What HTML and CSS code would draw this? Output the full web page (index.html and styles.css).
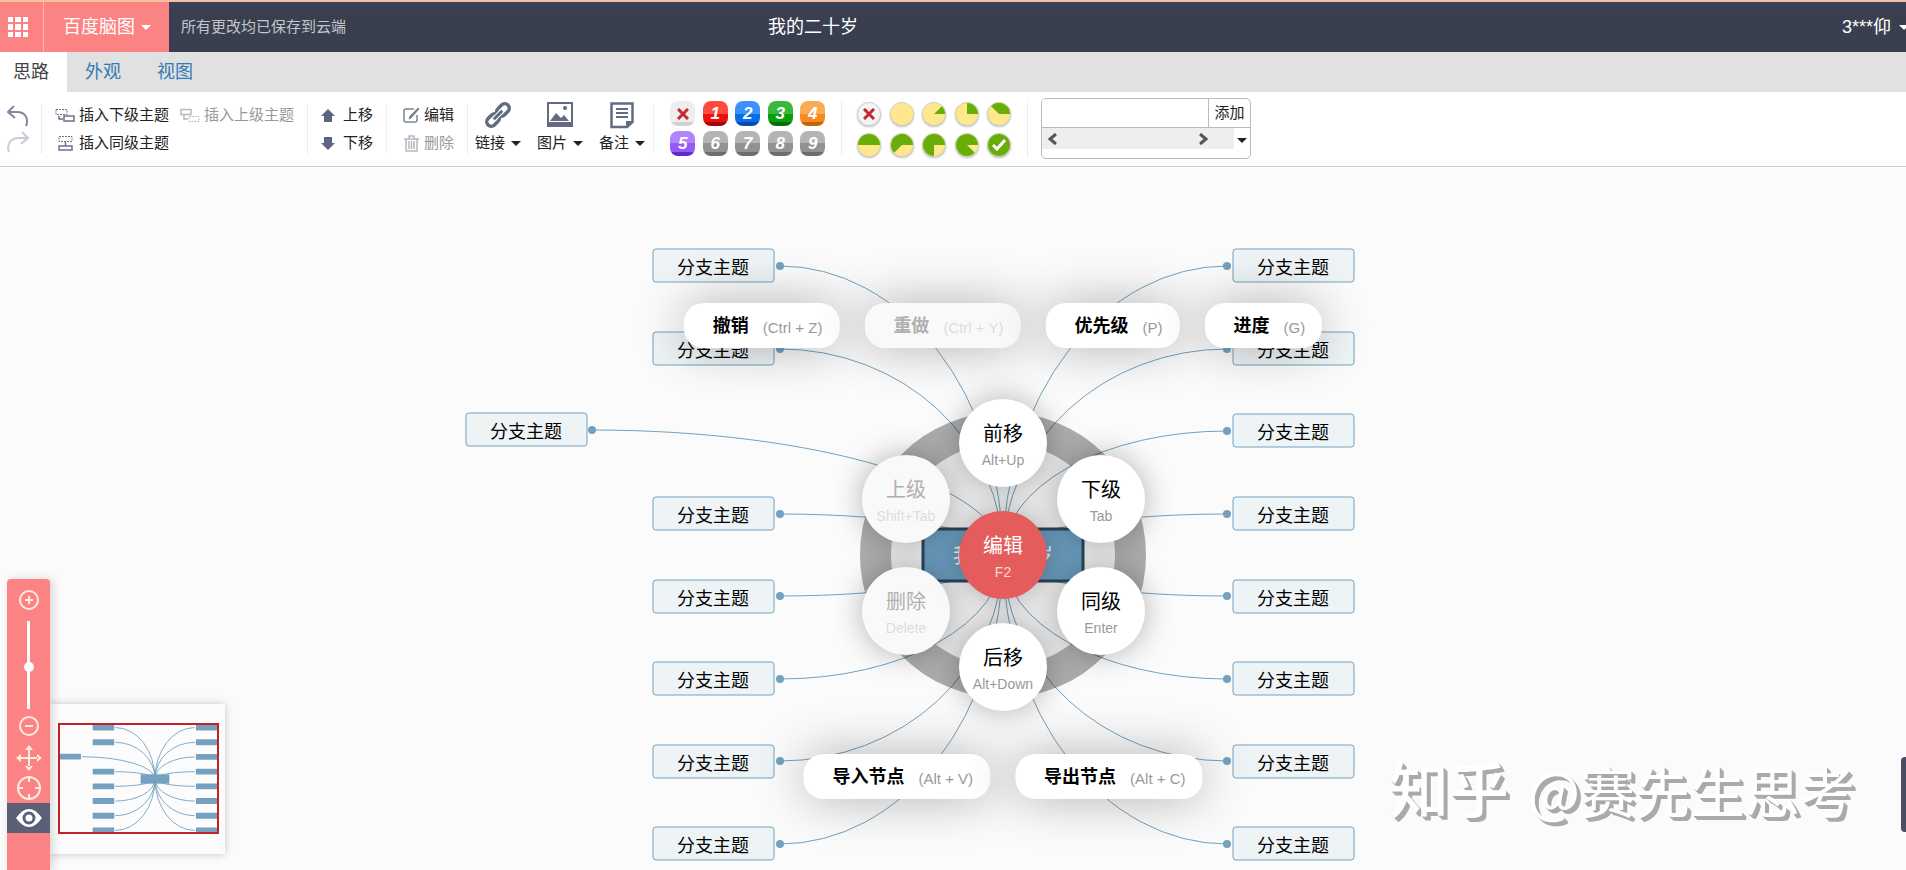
FILE: index.html
```html
<!DOCTYPE html>
<html lang="zh-CN">
<head>
<meta charset="utf-8">
<title>我的二十岁 - 百度脑图</title>
<link rel="stylesheet" href="styles.css">
</head>
<body>
<header class="header">
  <div class="header-left">
    <button class="apps" aria-label="应用">
      <svg width="20" height="20" fill="#fff"><path d="M0 0h5v5H0zM7 0h6v5H7zM15 0h5v5h-5zM0 7h5v6H0zM7 7h6v6H7zM15 7h5v6h-5zM0 15h5v5H0zM7 15h6v5H7zM15 15h5v5h-5z"/></svg>
    </button>
    <button class="brand">百度脑图<i class="caret"></i></button>
    <span class="saved">所有更改均已保存到云端</span>
  </div>
  <h1 class="title">我的二十岁</h1>
  <button class="user">3***仰<i class="caret"></i></button>
</header>

<nav class="tabs">
  <a class="tab active" href="#idea">思路</a>
  <a class="tab" href="#look">外观</a>
  <a class="tab" href="#view">视图</a>
</nav>

<div class="toolbar">
  <div class="group history">
    <button aria-label="撤销"><svg width="22" height="22" fill="none" stroke="#8088a0" stroke-width="2"><path d="M7 1L1 7l7 6M2 7h8c8 0 12 6 9 14"/></svg></button>
    <button aria-label="重做" disabled><svg width="22" height="22" fill="none" stroke="#c9ccd4" stroke-width="2"><path d="M15 1l6 6-7 6M20 7h-8C4 7-1 13 2 21"/></svg></button>
  </div>

  <div class="group insert">
    <div class="row">
      <button class="cmd"><svg width="20" height="15" fill="none" stroke="#6b7389"><path stroke-dasharray="2 1" d="M1 1.500h11v5H1z"/><path stroke-width="1.500" d="M4 8v3h4M9 8h10v5H9z"/></svg>插入下级主题</button>
      <button class="cmd" disabled><svg width="20" height="15" fill="none" stroke="#b5b9c3"><path stroke-width="1.500" d="M1 1.500h10v5H1zM4 7v4h4"/><path stroke-dasharray="2 1" d="M9 8.500h10v5H9z"/></svg>插入上级主题</button>
    </div>
    <div class="row">
      <button class="cmd"><svg width="20" height="16" fill="none" stroke="#6b7389"><path stroke-dasharray="2 1" d="M4 1.500h13v5H4z"/><path stroke-width="1.500" d="M10.500 7v4M4 11h13v4H4z"/></svg>插入同级主题</button>
    </div>
  </div>

  <div class="group arrange">
    <button class="cmd wide"><svg width="14" height="13" fill="#5c6480"><path d="M7 0l7 7h-3v6H3V7H0z"/></svg>上移</button>
    <button class="cmd wide"><svg width="14" height="13" fill="#5c6480"><path d="M7 13l7-7h-3V0H3v6H0z"/></svg>下移</button>
  </div>

  <div class="group edit">
    <button class="cmd"><svg width="17" height="16" fill="none" stroke="#7d8498" stroke-width="1.500"><path d="M11 2H3Q1 2 1 4v9q0 2 2 2h9q2 0 2-2V8"/><path fill="#7d8498" stroke-width="1" d="M15 1l1 1-8 9-2 1 1-3z"/></svg>编辑</button>
    <button class="cmd" disabled><svg width="17" height="17" fill="none" stroke="#b5b8c2" stroke-width="1.500"><path d="M1 4h15M6 4V1h5v3M3 4v12h11V4M6 6v8M8.500 6v8M11 6v8"/></svg>删除</button>
  </div>

  <div class="group attach">
    <button class="big"><svg width="28" height="28" viewBox="0 0 28 28"><g fill="none" stroke="#626b82" stroke-width="3.500" transform="rotate(-45 14 14)"><rect x="0" y="9.500" width="14" height="9" rx="4.500"/><rect x="14" y="9.500" width="14" height="9" rx="4.500"/><path stroke="#fff" stroke-width="5" d="M8 14h12"/><path d="M8 14h12" stroke-width="3"/></g></svg><span>链接<i class="caret"></i></span></button>
    <button class="big"><svg width="26" height="28" viewBox="0 0 26 28"><path fill="#626b82" d="M0 1h26v25H0z"/><path fill="#fff" d="M2 3h22v18H2z"/><path fill="#626b82" d="M3 20l6-8 5 5 3-3 5 6z"/><circle cx="18" cy="7" r="2" fill="#626b82"/></svg><span>图片<i class="caret"></i></span></button>
    <button class="big"><svg width="24" height="28" viewBox="0 0 24 28"><path fill="none" stroke="#626b82" stroke-width="2.500" d="M1.500 2.500h21V21L17 26H1.500z"/><path fill="#626b82" d="M16 20h7l-7 7zM6 7h12v2H6zM6 11h12v2H6zM6 15h12v2H6z"/></svg><span>备注<i class="caret"></i></span></button>
  </div>

  <div class="group priority">
    <button class="pri none" aria-label="移除优先级"><svg width="12" height="12" stroke="#c8272d" stroke-width="3"><path d="M1 1l10 10M11 1L1 11"/></svg></button>
    <button class="pri p1">1</button>
    <button class="pri p2">2</button>
    <button class="pri p3">3</button>
    <button class="pri p4">4</button>
    <button class="pri p5">5</button>
    <button class="pri">6</button>
    <button class="pri">7</button>
    <button class="pri">8</button>
    <button class="pri">9</button>
  </div>

  <div class="group progress">
    <button class="pie clear" aria-label="移除进度"><svg width="12" height="12" stroke="#c8272d" stroke-width="3"><path d="M1 1l10 10M11 1L1 11"/></svg></button>
    <button class="pie" aria-label="未开始"></button>
    <button class="pie" aria-label="完成 1/8"><svg width="22" height="22"><path d="M11 11L18.800 3.200A11 11 0 0 1 22 11z"/></svg></button>
    <button class="pie" aria-label="完成 1/4"><svg width="22" height="22"><path d="M11 11V0A11 11 0 0 1 22 11z"/></svg></button>
    <button class="pie" aria-label="完成 3/8"><svg width="22" height="22"><path d="M11 11L3.200 3.200A11 11 0 0 1 22 11z"/></svg></button>
    <button class="pie" aria-label="完成一半"><svg width="22" height="22"><path d="M0 11A11 11 0 0 1 22 11z"/></svg></button>
    <button class="pie" aria-label="完成 5/8"><svg width="22" height="22"><path d="M11 11L3.200 18.800A11 11 0 1 1 22 11z"/></svg></button>
    <button class="pie" aria-label="完成 3/4"><svg width="22" height="22"><path d="M11 11V22A11 11 0 1 1 22 11z"/></svg></button>
    <button class="pie" aria-label="完成 7/8"><svg width="22" height="22"><path d="M11 11L18.800 18.800A11 11 0 1 1 22 11z"/></svg></button>
    <button class="pie done" aria-label="已完成"><svg width="14" height="12"><path d="M1 6l4 4 8-9"/></svg></button>
  </div>

  <div class="tagbox">
    <div class="tag-row">
      <input type="text" class="tag-input" aria-label="标签">
      <button class="tag-add">添加</button>
    </div>
    <div class="tag-row">
      <div class="tag-scroll">
        <button aria-label="向左"><svg width="9" height="12" fill="none" stroke="#555" stroke-width="3"><path d="M8 1L2 6l6 5"/></svg></button>
        <button aria-label="向右"><svg width="9" height="12" fill="none" stroke="#555" stroke-width="3"><path d="M1 1l6 5-6 5"/></svg></button>
      </div>
      <button class="tag-more" aria-label="更多标签"><i class="caret"></i></button>
    </div>
  </div>
</div>

<main class="stage">
  <svg class="map" width="1" height="1">
    <defs>
      <g id="links">
        <path d="M0 0A223 289 0 0 0-223-289M0 0A223 206 0 0 0-223-206M0 0A411 125 0 0 0-411-125M0 0A223 41 0 0 0-223-41M0 0A223 41 0 0 1-223 41M0 0A223 124 0 0 1-223 124M0 0A223 206 0 0 1-223 206M0 0A223 289 0 0 1-223 289"/>
        <path d="M0 0A224 289 0 0 1 224-289M0 0A224 206 0 0 1 224-206M0 0A224 124 0 0 1 224-124M0 0A224 41 0 0 1 224-41M0 0A224 41 0 0 0 224 41M0 0A224 124 0 0 0 224 124M0 0A224 206 0 0 0 224 206M0 0A224 289 0 0 0 224 289"/>
      </g>
      <g id="boxes">
        <rect x="-350" y="-306" width="121" height="33" rx="3"/><rect x="-350" y="-223" width="121" height="33" rx="3"/><rect x="-537" y="-142" width="121" height="33" rx="3"/><rect x="-350" y="-58" width="121" height="33" rx="3"/><rect x="-350" y="25" width="121" height="33" rx="3"/><rect x="-350" y="107" width="121" height="33" rx="3"/><rect x="-350" y="190" width="121" height="33" rx="3"/><rect x="-350" y="272" width="121" height="33" rx="3"/>
        <rect x="230" y="-306" width="121" height="33" rx="3"/><rect x="230" y="-223" width="121" height="33" rx="3"/><rect x="230" y="-141" width="121" height="33" rx="3"/><rect x="230" y="-58" width="121" height="33" rx="3"/><rect x="230" y="25" width="121" height="33" rx="3"/><rect x="230" y="107" width="121" height="33" rx="3"/><rect x="230" y="190" width="121" height="33" rx="3"/><rect x="230" y="272" width="121" height="33" rx="3"/>
      </g>
    </defs>
    <use href="#links" class="links"/>
    <g class="dots">
      <circle cx="-223" cy="-289" r="4"/><circle cx="-223" cy="-206" r="4"/><circle cx="-411" cy="-125" r="4"/><circle cx="-223" cy="-41" r="4"/><circle cx="-223" cy="41" r="4"/><circle cx="-223" cy="124" r="4"/><circle cx="-223" cy="206" r="4"/><circle cx="-223" cy="289" r="4"/>
      <circle cx="224" cy="-289" r="4"/><circle cx="224" cy="-206" r="4"/><circle cx="224" cy="-124" r="4"/><circle cx="224" cy="-41" r="4"/><circle cx="224" cy="41" r="4"/><circle cx="224" cy="124" r="4"/><circle cx="224" cy="206" r="4"/><circle cx="224" cy="289" r="4"/>
    </g>
    <use href="#boxes" class="boxes"/>
    <g class="topics">
      <text x="-290" y="-281">分支主题</text><text x="-290" y="-198">分支主题</text><text x="-477" y="-117">分支主题</text><text x="-290" y="-33">分支主题</text><text x="-290" y="50">分支主题</text><text x="-290" y="132">分支主题</text><text x="-290" y="215">分支主题</text><text x="-290" y="297">分支主题</text>
      <text x="290" y="-281">分支主题</text><text x="290" y="-198">分支主题</text><text x="290" y="-116">分支主题</text><text x="290" y="-33">分支主题</text><text x="290" y="50">分支主题</text><text x="290" y="132">分支主题</text><text x="290" y="215">分支主题</text><text x="290" y="297">分支主题</text>
    </g>
    <rect class="root" x="-80" y="-26" width="160" height="52" rx="4"/>
    <text class="root-text" x="0" y="8">我的二十岁</text>
  </svg>

  <div class="hotbox">
    <div class="ring"></div>
    <div class="pills above">
      <button class="pill"><b>撤销</b><kbd>(Ctrl + Z)</kbd></button>
      <button class="pill" disabled><b>重做</b><kbd>(Ctrl + Y)</kbd></button>
      <button class="pill"><b>优先级</b><kbd>(P)</kbd></button>
      <button class="pill"><b>进度</b><kbd>(G)</kbd></button>
    </div>
    <div class="pills below">
      <button class="pill"><b>导入节点</b><kbd>(Alt + V)</kbd></button>
      <button class="pill"><b>导出节点</b><kbd>(Alt + C)</kbd></button>
    </div>
    <button class="disc n">前移<kbd>Alt+Up</kbd></button>
    <button class="disc ne">下级<kbd>Tab</kbd></button>
    <button class="disc se">同级<kbd>Enter</kbd></button>
    <button class="disc s">后移<kbd>Alt+Down</kbd></button>
    <button class="disc sw" disabled>删除<kbd>Delete</kbd></button>
    <button class="disc nw" disabled>上级<kbd>Shift+Tab</kbd></button>
    <button class="disc center">编辑<kbd>F2</kbd></button>
  </div>

  <div class="preview">
    <svg width="175" height="150">
      <clipPath id="frame"><path d="M9 20h159v110H9z"/></clipPath>
      <g clip-path="url(#frame)">
        <g transform="translate(105 75) scale(.178)">
          <use href="#links" class="mini-links"/>
          <use href="#boxes" class="mini-boxes"/>
          <path class="mini-boxes" d="M-80-26H80V26H-80z" stroke="#73a1bf"/>
        </g>
      </g>
      <path d="M9 20h159v109H9z" fill="none" stroke="#c42127" stroke-width="2"/>
    </svg>
  </div>

  <div class="navigator">
    <button aria-label="放大"><svg width="22" height="22" fill="none" stroke="#ffeae0" stroke-width="2"><circle cx="11" cy="11" r="9"/><path d="M7 11h8M11 7v8"/></svg></button>
    <input class="zoom" type="range" min="0" max="100" value="48" aria-label="缩放">
    <button aria-label="缩小"><svg width="22" height="22" fill="none" stroke="#ffeae0" stroke-width="2"><circle cx="11" cy="11" r="9"/><path d="M7 11h8"/></svg></button>
    <button aria-label="拖动"><svg width="26" height="26" fill="#ffeae0"><path d="M12 4h2v18h-2zM4 12h18v2H4zM13 0l4 5H9zM13 26l4-5H9zM0 13l5-4v8zM26 13l-5-4v8z"/></svg></button>
    <button aria-label="定位根节点"><svg width="26" height="26" fill="none" stroke="#ffeae0" stroke-width="2"><circle cx="13" cy="13" r="11"/><path d="M13 1v6M13 19v6M1 13h6M19 13h6"/></svg></button>
    <button class="eye" aria-label="导航器"><svg width="26" height="18"><path fill="#fff" d="M0 9q13-18 26 0-13 18-26 0z"/><circle cx="13" cy="9" r="5" fill="none" stroke="#5b6077" stroke-width="3"/></svg></button>
  </div>

  <p class="watermark"><strong>知乎</strong> @赛先生思考</p>
  <button class="side-handle" aria-label="展开侧栏"></button>
</main>
</body>
</html>
```

FILE: styles.css
```css
* { box-sizing: border-box; }

body {
  margin: 0;
  height: 100vh;
  display: flex;
  flex-direction: column;
  overflow: hidden;
  background: #fbfbfb;
  color: #222;
  font: 15px/20px "Liberation Sans", "Noto Sans CJK SC", sans-serif;
}

button {
  margin: 0;
  padding: 0;
  border: 0;
  background: none;
  color: inherit;
  font: inherit;
  white-space: nowrap;
}

svg { display: block; flex: none; }

.caret {
  display: inline-block;
  flex: none;
  border: 5px solid transparent;
  border-top-color: currentColor;
  border-bottom: 0;
}

/* header */
.header {
  display: flex;
  align-items: stretch;
  height: 52px;
  border-top: 2px solid #f4c29c;
  background: linear-gradient(#37425a, #3a3f4f 8px);
  color: #fff;
}

.header-left { display: flex; flex: 0 0 40.3%; }

.apps {
  display: grid;
  place-items: center start;
  width: 44px;
  padding-left: 8px;
  border-right: 1px solid #fdb4b4;
  background: #fc8383;
}

.brand {
  display: flex;
  align-items: center;
  gap: 6px;
  width: 125px;
  padding-left: 19px;
  background: #fc8383;
  font-size: 18px;
}

.saved { align-self: center; padding-left: 12px; color: #c4c6cc; }

.title { margin: 0; align-self: center; font-size: 18px; font-weight: 400; }

.user {
  display: flex;
  align-items: center;
  gap: 8px;
  margin: 0 -3px 0 auto;
  font-size: 18px;
}

/* tabs */
.tabs { display: flex; height: 40px; background: #e1e1e1; }

.tab {
  padding: 0 18px;
  color: #337ab7;
  font-size: 18px;
  line-height: 40px;
  text-decoration: none;
}

.tab.active { padding-left: 13px; background: #fff; color: #444; }

/* toolbar */
.toolbar {
  display: flex;
  height: 75px;
  border-bottom: 1px solid #ccc;
  background: #fff;
}

.group {
  display: flex;
  flex: none;
  height: 48px;
  margin-top: 13px;
  border-right: 1px dotted #ddd;
}

.history { flex-direction: column; align-items: flex-start; justify-content: space-between; padding: 0 12px 0 7px; }

.insert, .arrange, .edit { flex-direction: column; justify-content: space-between; padding: 0 13px; }
.edit { padding-left: 16px; }

.row { display: flex; gap: 11px; }

.cmd { display: flex; align-items: center; gap: 4px; }
.cmd.wide { gap: 8px; }
.cmd:disabled { color: #999; }

.attach { gap: 16px; align-items: flex-end; padding: 0 8px 0 7px; }
.big { display: flex; flex-direction: column; align-items: center; gap: 4px; }
.big span { display: flex; align-items: center; gap: 6px; }

.priority {
  display: grid;
  grid-template-columns: repeat(5, 25px);
  justify-content: space-between;
  row-gap: 5px;
  width: 188px;
  height: 55px;
  margin-top: 9px;
  padding: 0 16px;
}

.pri {
  height: 25px;
  border-radius: 8px;
  background: linear-gradient(#b4b4b4 0 50%, #929292 50% 84%, #6c6c6c 84%);
  color: #fff;
  font: italic bold 17px/23px "Liberation Sans", sans-serif;
}

.pri.none { display: grid; place-items: center; background: linear-gradient(#eee 0 84%, #d0d0d0 84%); }
.p1 { background: linear-gradient(#ff4a3d 0 50%, #ea1010 50% 84%, #a80606 84%); }
.p2 { background: linear-gradient(#3c92f8 0 50%, #0a6ceb 50% 84%, #074bb0 84%); }
.p3 { background: linear-gradient(#3bb83b 0 50%, #0a9f0a 50% 84%, #067006 84%); }
.p4 { background: linear-gradient(#fbab53 0 50%, #f48a20 50% 84%, #c76206 84%); }
.p5 { background: linear-gradient(#b383fb 0 50%, #975af5 50% 84%, #5d2ccb 84%); }

.progress {
  display: grid;
  grid-template-columns: repeat(5, 24px);
  justify-content: space-between;
  row-gap: 6px;
  width: 186px;
  height: 55px;
  margin-top: 10px;
  padding: 0 16px 0 15px;
}

.pie {
  display: grid;
  place-items: center;
  width: 24px;
  height: 24px;
  border: 1px solid #d4d0c4;
  border-radius: 50%;
  background: #ffe88c;
  box-shadow: 0 1px 2px #bbb;
  fill: #68ae08;
}

.clear { background: #f4f4f4; }
.done { background: #68ae08; fill: none; stroke: #fff; stroke-width: 3px; }

.tagbox {
  flex: none;
  width: 210px;
  height: 61px;
  margin: 6px 0 0 13px;
  overflow: hidden;
  border: 1px solid #bbb;
  border-radius: 5px;
}

.tag-row { display: flex; }
.tag-row:first-child { height: 29px; border-bottom: 1px solid #bbb; }
.tag-input { flex: 1; min-width: 0; border: 0; outline: 0; font: inherit; }
.tag-add { width: 42px; border-left: 1px solid #bbb; }

.tag-scroll {
  display: flex;
  justify-content: space-between;
  flex: 1;
  height: 21px;
  padding: 0 26px 0 6px;
  background: #eee;
}

.tag-more { display: grid; place-items: center; width: 16px; height: 24px; }

/* mind map */
.stage { position: relative; flex: 1; min-height: 0; overflow: hidden; }

.map { position: absolute; left: calc(50% + 50px); top: 388px; overflow: visible; }

.links { fill: none; stroke: #73a1bf; }
.dots { fill: #73a1bf; }
.boxes { fill: #eef3f6; stroke: #73a1bf; }

.topics { fill: #000; font-size: 18px; text-anchor: middle; }

.root { fill: #70a4c8; stroke: #2c4a60; stroke-width: 3px; }
.root-text { fill: #fff; font-size: 20px; text-anchor: middle; }

/* radial menu */
.hotbox { position: absolute; left: calc(50% + 50px); top: 388px; width: 0; height: 0; }

.ring {
  position: absolute;
  left: -143px;
  top: -143px;
  width: 286px;
  height: 286px;
  border: 31px solid rgba(0, 0, 0, .28);
  border-radius: 50%;
  background: rgba(0, 0, 0, .05);
}

.pills {
  position: absolute;
  left: 0;
  display: flex;
  gap: 25px;
  transform: translateX(-50%);
}

.above { top: -252px; }
.below { top: 199px; }

.pill {
  display: flex;
  align-items: center;
  gap: 14px;
  height: 45px;
  padding: 0 17px 0 29px;
  border-radius: 20px;
  background: #fff;
  box-shadow: 0 0 50px rgba(0, 0, 0, .3);
  color: #000;
  font-size: 18px;
}

kbd { font: 15px/20px "Liberation Sans", sans-serif; color: #999; }
.pill kbd { padding-top: 4px; }

.disc {
  position: absolute;
  display: flex;
  flex-direction: column;
  align-items: center;
  justify-content: center;
  gap: 4px;
  width: 88px;
  height: 88px;
  padding-top: 6px;
  border-radius: 50%;
  background: #fff;
  box-shadow: 0 0 30px rgba(0, 0, 0, .3);
  color: #000;
  font-size: 20px;
  line-height: 24px;
}

.disc kbd { font-size: 14px; }

.n { left: -44px; top: -156px; }
.s { left: -44px; top: 68px; }
.ne { left: 54px; top: -100px; }
.se { left: 54px; top: 12px; }
.nw { left: -141px; top: -100px; }
.sw { left: -141px; top: 12px; }

.center { left: -44px; top: -44px; background: #e45d5c; color: #fff; }
.center kbd { color: #f9d6d5; }

.pill:disabled, .disc:disabled { background: #f9f9f9; color: #b0b0b0; }
.pill:disabled kbd, .disc:disabled kbd { color: #ddd; }

/* navigator */
.navigator {
  position: absolute;
  left: 7px;
  bottom: 0;
  display: flex;
  flex-direction: column;
  align-items: center;
  width: 43px;
  height: 291px;
  padding-top: 10px;
  border-radius: 4px 4px 0 0;
  background: #fc8383;
  box-shadow: 3px 0 10px rgba(0, 0, 0, .15);
}

.navigator button { display: grid; place-items: center; width: 100%; height: 30px; flex: none; }
.navigator button:first-child, .zoom + button { height: 22px; }
.zoom + button { margin-bottom: 6px; }
.navigator .eye { background: #5b6077; }

.zoom {
  width: 12px;
  height: 88px;
  margin: 10px 0 6px;
  appearance: none;
  background: linear-gradient(#fff, #fff) center / 3px 100% no-repeat;
  writing-mode: vertical-lr;
  direction: rtl;
}

.zoom::-webkit-slider-thumb {
  appearance: none;
  width: 10px;
  height: 10px;
  border-radius: 50%;
  background: #fff;
}

.preview {
  position: absolute;
  left: 50px;
  bottom: 16px;
  background: #fcfcfc;
  box-shadow: 0 0 8px rgba(0, 0, 0, .22);
}

.mini-links { fill: none; stroke: #73a1bf; stroke-width: 5px; }
.mini-boxes { fill: #73a1bf; }

.watermark {
  position: absolute;
  right: 51px;
  bottom: 46px;
  margin: 0;
  color: #fff;
  font: 55px/70px "Noto Sans CJK SC", sans-serif;
  text-shadow: 1px 1px #aaa, 2px 2px #aaa, 3px 3px #aaa, 4px 4px #aaa;
}

.watermark strong { margin-right: 7px; font-size: 60px; font-weight: 500; }

.side-handle {
  position: absolute;
  right: 0;
  bottom: 38px;
  width: 5px;
  height: 75px;
  border-radius: 4px 0 0 4px;
  background: #4a4e62;
}
```
